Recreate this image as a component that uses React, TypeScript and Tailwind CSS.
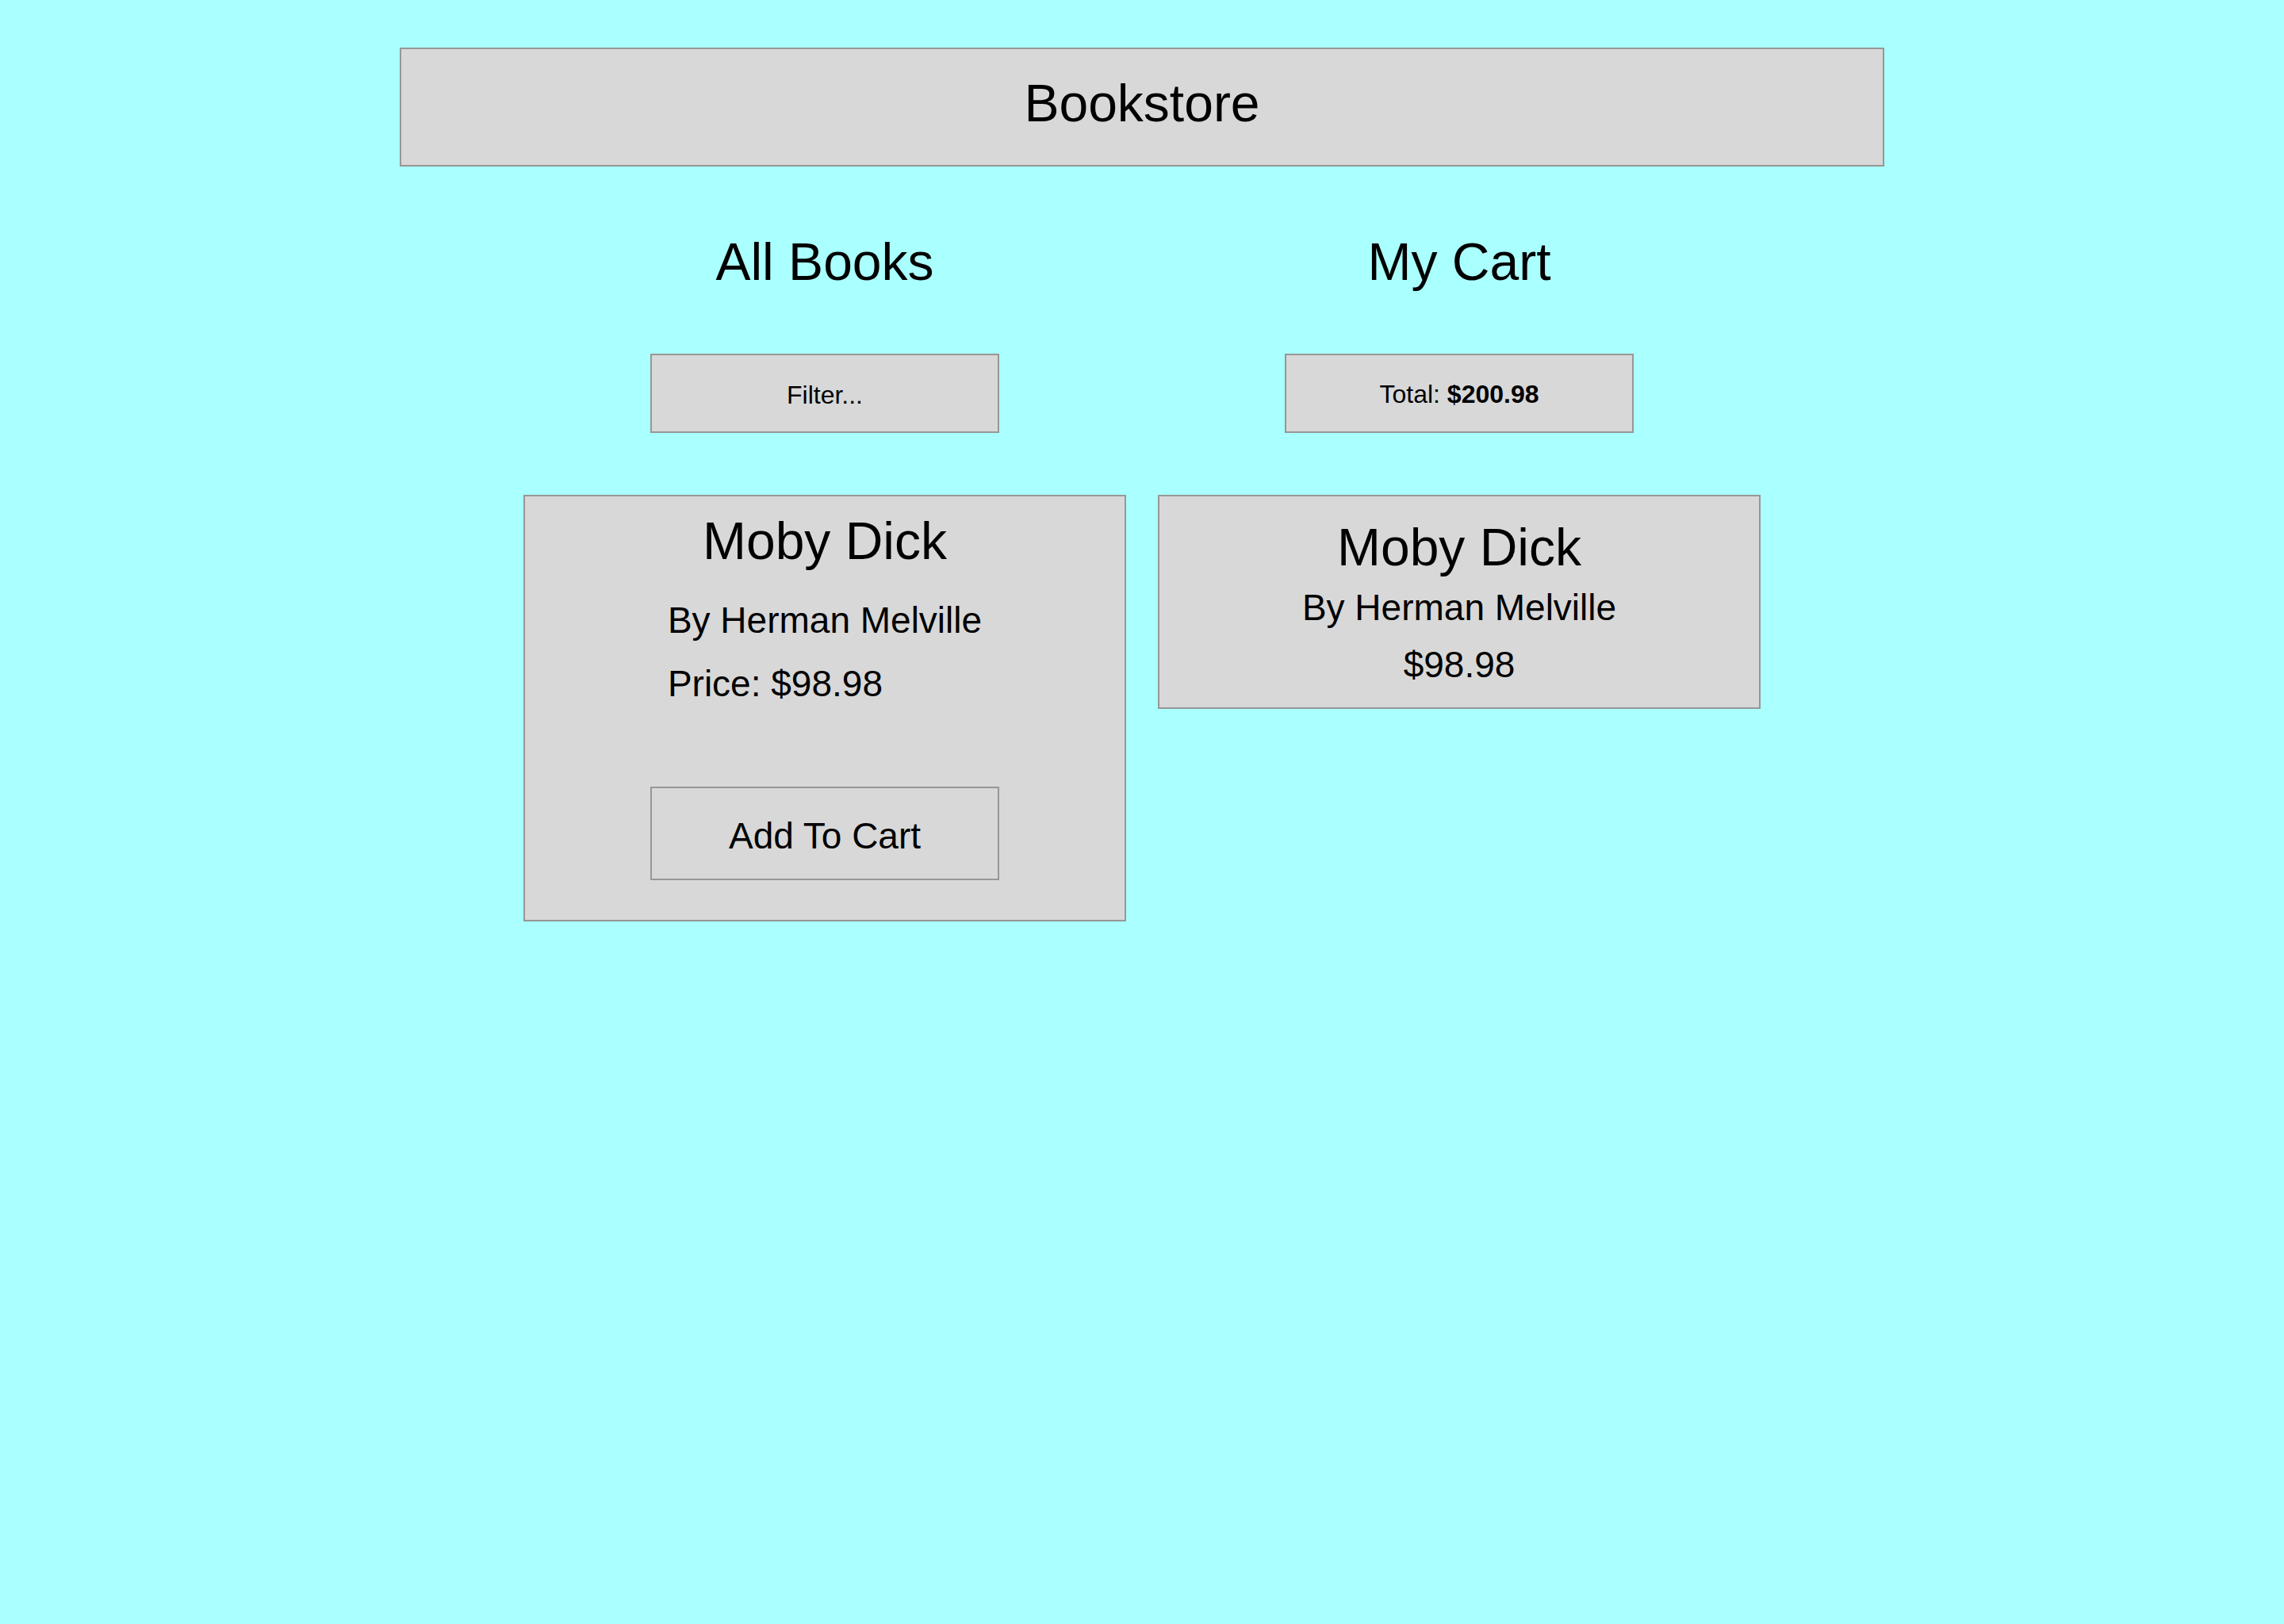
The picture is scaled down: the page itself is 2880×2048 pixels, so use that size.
import type { ReactNode } from "react";

type Book = { title: string; author: string; price: string };

const books: Book[] = [{ title: "Moby Dick", author: "Herman Melville", price: "$98.98" }];
const cart: Book[] = [{ title: "Moby Dick", author: "Herman Melville", price: "$98.98" }];

function Column({ title, children }: { title: string; children: ReactNode }) {
  return (
    <section className="flex min-w-0 flex-1 flex-col items-center">
      <h2 className="mb-20 text-[66px] leading-[72px]">{title}</h2>
      {children}
    </section>
  );
}

function BookCard({ book }: { book: Book }) {
  return (
    <article className="flex w-full flex-col items-center border-2 border-[#979797] bg-[#d8d8d8] pt-5 pb-[50px]">
      <h3 className="text-[66px] leading-[72px]">{book.title}</h3>
      <div className="mt-9 flex flex-col gap-6 text-[46px] leading-[56px]">
        <p>By {book.author}</p>
        <p>Price: {book.price}</p>
      </div>
      <button
        type="button"
        className="mt-[102px] w-[440px] max-w-full cursor-pointer border-2 border-[#979797] pt-8 pb-[26px] text-[46px] leading-[56px]"
      >
        Add To Cart
      </button>
    </article>
  );
}

function CartCard({ book }: { book: Book }) {
  return (
    <article className="flex w-full flex-col items-center border-2 border-[#979797] bg-[#d8d8d8] pt-7 pb-[26px] text-[46px] leading-[56px]">
      <h3 className="text-[66px] leading-[72px]">{book.title}</h3>
      <p className="mt-3">By {book.author}</p>
      <p className="mt-4">{book.price}</p>
    </article>
  );
}

export default function App() {
  return (
    <div className="flex min-h-screen flex-col items-center bg-[#aaffff] pt-15 pb-20 font-['Liberation_Sans',Arial,sans-serif] text-black">
      <header className="w-[65%] border-2 border-[#979797] bg-[#d8d8d8] pt-8 pb-[42px] text-center">
        <h1 className="text-[66px] leading-[72px]">Bookstore</h1>
      </header>

      <main className="mt-21 flex w-[65%] justify-center">
        <div className="flex w-5/6 items-start gap-10">
          <Column title="All Books">
            <input
              type="text"
              aria-label="Filter books"
              placeholder="Filter..."
              className="w-[440px] max-w-full border-2 border-[#979797] bg-[#d8d8d8] pt-8 pb-7 text-center text-[32px] leading-[36px] placeholder:text-black placeholder:opacity-100"
            />
            <div className="mt-[78px] flex w-full flex-col gap-10">
              {books.map((book) => (
                <BookCard key={book.title} book={book} />
              ))}
            </div>
          </Column>

          <Column title="My Cart">
            <p className="w-[440px] max-w-full border-2 border-[#979797] bg-[#d8d8d8] pt-[31px] pb-[29px] text-center text-[32px] leading-[36px]">
              Total: <strong>$200.98</strong>
            </p>
            <div className="mt-[78px] flex w-full flex-col gap-10">
              {cart.map((book) => (
                <CartCard key={book.title} book={book} />
              ))}
            </div>
          </Column>
        </div>
      </main>
    </div>
  );
}
